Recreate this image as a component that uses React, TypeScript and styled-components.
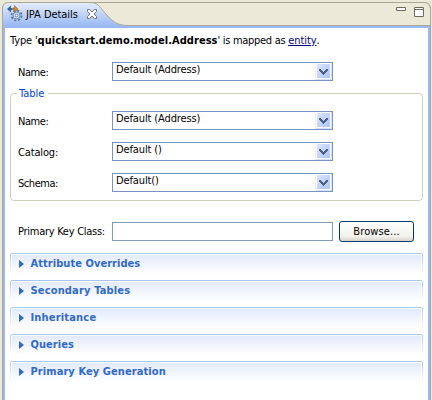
import React from "react";
import styled, { createGlobalStyle } from "styled-components";

const GlobalStyle = createGlobalStyle`
  * { box-sizing: border-box; }
  body { margin: 0; background: #ece9d8; overflow: hidden; }
`;

const Page = styled.div`
  width: 432px;
  height: 400px;
  padding: 2px 1px 0 2px;
  background: #ece9d8;
  color: #000;
  font: 11px/14px "DejaVu Sans Condensed", "DejaVu Sans", sans-serif;
  font-stretch: condensed;
  overflow: hidden;
  white-space: nowrap;
`;

const View = styled.div`
  height: 398px;
  display: flex;
  flex-direction: column;
  border: 1px solid #aca899;
  border-width: 0 1px 0 1px;
  border-radius: 7px 7px 0 0;
`;

const Header = styled.div`
  position: relative;
  height: 24px;
  flex: none;
  margin: 0 -1px;
  display: flex;
  align-items: flex-start;
`;

const TabShape = styled.svg`
  position: absolute;
  inset: 0;
`;

const Tab = styled.div`
  position: relative;
  display: flex;
  flex: 1;
  padding: 3px 0 0 5px;
`;

const TabTitle = styled.span<{ $spacing: number }>`
  width: 60px;
  margin: 3px 0 0 3px;
  letter-spacing: ${(p) => p.$spacing}px;
`;

const CloseIcon = styled.svg`
  margin-top: 3px;
`;

const WindowButtons = styled.div`
  position: relative;
  display: flex;
  gap: 8px;
  padding: 5px 7px 0 0;
`;

const Body = styled.div`
  flex: 1;
  border: 2px solid #99b9f4;
  border-bottom: 0;
  background: #fff;
  padding: 6px 5px 0 5px;
`;

const Summary = styled.div`
  height: 16px;
`;

const Run = styled.span<{ $spacing?: number }>`
  letter-spacing: ${(p) => p.$spacing ?? 0}px;
`;

const StrongRun = styled(Run)`
  font-weight: bold;
`;

const Link = styled(Run)`
  color: #000080;
  text-decoration: underline;
  text-underline-offset: 1px;
  text-decoration-thickness: 1px;
`;

const Row = styled.div`
  height: 19px;
  display: flex;
  padding-left: 7px;
`;

const TopRow = styled(Row)`
  margin: 12px 0 0 1px;
`;

const Label = styled.label<{ $spacing?: number }>`
  width: 94px;
  padding-top: 4px;
  letter-spacing: ${(p) => p.$spacing ?? 0}px;
`;

const Combo = styled.div`
  width: 221px;
  height: 19px;
  display: flex;
  justify-content: space-between;
  border: 1px solid #7794c4;
  background: #fff;
  padding-left: 3px;
`;

const ComboText = styled(Run)`
  line-height: 14px;
`;

const Group = styled.fieldset`
  position: relative;
  height: 108px;
  margin: 12px 0 0;
  padding: 17px 0 0;
  border: 1px solid #d0d0bf;
  border-radius: 4px;
  display: flex;
  flex-direction: column;
  gap: 12px;
`;

const GroupTitle = styled.span`
  position: absolute;
  left: 6px;
  top: -7px;
  width: 31px;
  padding-left: 2px;
  background: #fff;
  color: #0046d5;
`;

const KeyRow = styled.div`
  height: 21px;
  margin: 20px 0 0 1px;
  padding-left: 7px;
  display: flex;
  align-items: center;
`;

const KeyLabel = styled(Label)`
  padding-top: 1px;
`;

const Field = styled.input`
  width: 221px;
  height: 19px;
  padding: 0 3px;
  border: 1px solid #7f9db9;
  background: #fff;
  font: inherit;
  outline: 0;
`;

const Button = styled.button`
  width: 75px;
  height: 21px;
  margin-left: 6px;
  padding: 1px 0 0;
  border: 1px solid #003c74;
  border-radius: 3px;
  background: linear-gradient(#fff, #f3f2ed 75%, #e6e3db 88%, #d6d0c5);
  color: #000;
  font: inherit;
  letter-spacing: 0.1px;
`;

const Sections = styled.div`
  display: flex;
  flex-direction: column;
  gap: 6px;
  margin-top: 11px;
`;

const Section = styled.div`
  height: 21px;
  display: flex;
  padding: 6px 0 0 9px;
  border-radius: 3px 3px 0 0;
  border-top: 1px solid #a9c6f2;
  background:
    linear-gradient(#a9c6f2, #fff) left / 1px 100% no-repeat,
    linear-gradient(#a9c6f2, #fff) right / 1px 100% no-repeat,
    linear-gradient(#fff, #fff) top / 100% 1px no-repeat,
    linear-gradient(#fff, #fff) 1px 0 / 1px 100% no-repeat,
    linear-gradient(#fff, #fff) calc(100% - 1px) 0 / 1px 100% no-repeat,
    linear-gradient(#e1e9fa, #fff);
`;

const SectionTitle = styled(StrongRun)`
  margin: -3px 0 0 6.5px;
  color: #316ac5;
`;

const ViewIcon = () => (
  <svg width="16" height="17" viewBox="0 0 16 17">
    <circle cx="9.5" cy="10.5" r="5" fill="none" stroke="#55779f" strokeWidth="1.8" strokeDasharray="2.1 1.827" />
    <circle cx="9.5" cy="10.5" r="3.5" fill="#c9dcf0" stroke="#6d90ba" />
    <circle cx="9.5" cy="10.5" r="1.3" fill="#fff" stroke="#55779f" strokeWidth=".8" />
    <path d="M0 4 4 .5V3h1.5v2H4v2.5Z" fill="#36649a" />
    <path d="M11 4 7.5 .5V3H6v2h1.5v2.5Z" fill="#d08a2c" stroke="#9c5b10" strokeWidth=".5" />
  </svg>
);

const DropButton = () => (
  <svg width="17" height="17" viewBox="0 0 17 17" shapeRendering="crispEdges">
    <defs>
      <linearGradient id="drop" x1="0" y1="0" x2="1" y2="1">
        <stop offset="0" stopColor="#dbe5ff" />
        <stop offset=".5" stopColor="#c3d3fd" />
        <stop offset="1" stopColor="#afc6f5" />
      </linearGradient>
    </defs>
    <path d="M0 0h1v17H0z" fill="#eeeee6" />
    <rect x="1" width="16" height="17" fill="#d5e0fa" />
    <rect x="1" y="0" width="15" height="16" fill="#fff" />
    <rect x="2" y="1" width="13" height="14" fill="url(#drop)" />
    <path d="M4 6h2v1h1v1h1v1h1V8h1V7h1V6h2v2h-1v1h-1v1h-1v1H9v1H8v-1H7v-1H6V9H5V8H4z" fill="#4d6185" />
  </svg>
);

interface ComboRowProps {
  label: string;
  value: string;
  top?: boolean;
  labelSpacing?: number;
  valueSpacing?: number;
}

function ComboRow({ label, value, top, labelSpacing, valueSpacing }: ComboRowProps) {
  const Line = top ? TopRow : Row;
  return (
    <Line>
      <Label $spacing={labelSpacing}>{label}</Label>
      <Combo>
        <ComboText $spacing={valueSpacing}>{value}</ComboText>
        <DropButton />
      </Combo>
    </Line>
  );
}

const sections = [
  { title: "Attribute Overrides", spacing: 0.05 },
  { title: "Secondary Tables", spacing: 0.16 },
  { title: "Inheritance", spacing: 0.18 },
  { title: "Queries", spacing: 0.05 },
  { title: "Primary Key Generation", spacing: 0.08 },
];

export default function App() {
  return (
    <>
      <GlobalStyle />
      <Page>
        <View>
          <Header>
            <TabShape width="429" height="24" viewBox="0 0 429 24">
              <defs>
                <linearGradient id="tab" x1="0" y1="0" x2="0" y2="1">
                  <stop offset="0" stopColor="#e6eefd" />
                  <stop offset="1" stopColor="#99b9f4" />
                </linearGradient>
              </defs>
              <path d="M.5 24V7Q.5 .5 7 .5H88C96 .5 98 5 103 11C111 20 115 23.5 127 23.5V24Z" fill="url(#tab)" />
              <path d="M.5 24V7Q.5 .5 7 .5H422Q428.5 .5 428.5 7V24M88 .5C96 .5 98 5 103 11C111 20 115 23.5 127 23.5H428" fill="none" stroke="#aca899" />
            </TabShape>
            <Tab>
              <ViewIcon />
              <TabTitle $spacing={-0.05}>JPA Details</TabTitle>
              <CloseIcon width="12" height="12" viewBox="0 0 12 12">
                <path d="M1.5 1.5h2L6 4l2.5-2.5h2v2L8 6l2.5 2.5v2h-2L6 8l-2.5 2.5h-2v-2L4 6 1.5 3.5z" fill="#fff" stroke="#777168" />
              </CloseIcon>
            </Tab>
            <WindowButtons>
              <svg width="10" height="4" viewBox="0 0 10 4"><path d="M.5 .5h9v3h-9z" fill="#fff" stroke="#6d6a60" /></svg>
              <svg width="10" height="10" viewBox="0 0 10 10"><path d="M.5 .5h9v9h-9zM0 2.5h10" fill="#fff" stroke="#6d6a60" /></svg>
            </WindowButtons>
          </Header>
          <Body>
            <Summary>
              <Run $spacing={-0.15}>Type '</Run>
              <StrongRun $spacing={0.05}>quickstart.demo.model.Address</StrongRun>
              <Run $spacing={-0.3}>' is mapped as </Run>
              <Link $spacing={-0.05}>entity</Link>
              <Run>.</Run>
            </Summary>
            <ComboRow top label="Name:" value="Default (Address)" labelSpacing={-0.45} valueSpacing={-0.12} />
            <Group>
              <GroupTitle>Table</GroupTitle>
              <ComboRow label="Name:" value="Default (Address)" labelSpacing={-0.45} valueSpacing={-0.12} />
              <ComboRow label="Catalog:" value="Default ()" labelSpacing={-0.15} valueSpacing={-0.12} />
              <ComboRow label="Schema:" value="Default()" labelSpacing={-0.45} valueSpacing={-0.12} />
            </Group>
            <KeyRow>
              <KeyLabel $spacing={-0.27}>Primary Key Class:</KeyLabel>
              <Field aria-label="Primary Key Class" />
              <Button>Browse...</Button>
            </KeyRow>
            <Sections>
              {sections.map((s) => (
                <Section key={s.title}>
                  <svg width="5" height="8" viewBox="0 0 5 8"><path d="M0 0 5 4 0 8Z" fill="#316ac5" /></svg>
                  <SectionTitle $spacing={s.spacing}>{s.title}</SectionTitle>
                </Section>
              ))}
            </Sections>
          </Body>
        </View>
      </Page>
    </>
  );
}
